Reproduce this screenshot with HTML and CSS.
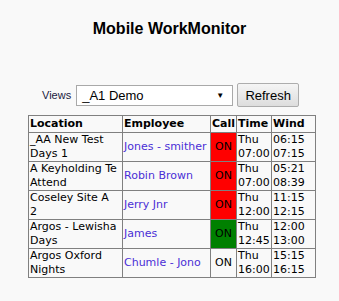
FILE: index.html
```html
<!DOCTYPE html>
<html lang="en">
<head>
    <meta charset="UTF-8">
    <title>Mobile WorkMonitor</title>
    <link rel="stylesheet" href="styles.css">
</head>
<body>
    <h1 class="title">Mobile WorkMonitor</h1>

    <div class="views">
        <span class="views-label">Views</span>
        <div class="select">
            <span>_A1 Demo</span>
            <span class="arrow">&#9660;</span>
        </div>
        <button class="refresh">Refresh</button>
    </div>

    <table class="jobs">
        <colgroup>
            <col class="c-loc">
            <col class="c-emp">
            <col class="c-call">
            <col class="c-time">
            <col class="c-wind">
        </colgroup>
        <tr>
            <th>Location</th>
            <th>Employee</th>
            <th>Call</th>
            <th>Time</th>
            <th>Wind</th>
        </tr>
        <tr>
            <td>_AA New Test Days 1</td>
            <td class="name">Jones - smither</td>
            <td class="call red">ON</td>
            <td>Thu 07:00</td>
            <td>06:15 07:15</td>
        </tr>
        <tr>
            <td>A Keyholding Te Attend</td>
            <td class="name">Robin Brown</td>
            <td class="call red">ON</td>
            <td>Thu 07:00</td>
            <td>05:21 08:39</td>
        </tr>
        <tr>
            <td>Coseley Site A 2</td>
            <td class="name">Jerry Jnr</td>
            <td class="call red">ON</td>
            <td>Thu 12:00</td>
            <td>11:15 12:15</td>
        </tr>
        <tr>
            <td>Argos - Lewisha Days</td>
            <td class="name">James</td>
            <td class="call green">ON</td>
            <td>Thu 12:45</td>
            <td>12:00 13:00</td>
        </tr>
        <tr>
            <td>Argos Oxford Nights</td>
            <td class="name">Chumle - Jono</td>
            <td class="call">ON</td>
            <td>Thu 16:00</td>
            <td>15:15 16:15</td>
        </tr>
    </table>
</body>
</html>
```

FILE: styles.css
```css
body{
    margin: 0;
    background-color: #f9f9f9;
    font-family: "Liberation Sans", Arial, sans-serif;
    color: #000;
}
.title{
    margin: 19px 0 0 0;
    font-size: 16px;
    font-weight: 700;
    text-align: center;
    line-height: 19px;
}
.views{
    display: flex;
    align-items: center;
    margin: 45px 0 0 42px;
    font-size: 11px;
}
.views-label{
    margin-right: 5px;
    color: #1a1a40;
}
.select{
    display: flex;
    justify-content: space-between;
    align-items: center;
    box-sizing: border-box;
    width: 157px;
    height: 21px;
    padding: 0 8px 0 5px;
    background-color: #fff;
    border: 1px solid #a9a9a9;
    font-size: 13px;
}
.arrow{
    font-size: 8px;
}
.refresh{
    box-sizing: border-box;
    height: 24px;
    width: 62px;
    margin-left: 4px;
    padding: 0;
    font-family: "Liberation Sans", Arial, sans-serif;
    font-size: 13px;
    color: #000;
    background: linear-gradient(#f5f5f5, #dddddd);
    border: 1px solid #adadad;
    border-radius: 2px;
}
.jobs{
    margin: 8px 0 0 28px;
    border-collapse: collapse;
    border: 1px solid #808080;
    font-family: "DejaVu Sans", Verdana, sans-serif;
    font-size: 11px;
    table-layout: fixed;
    width: 288px;
}
.c-loc{
    width: 94px;
}
.c-emp{
    width: 88px;
}
.c-call{
    width: 26px;
}
.c-time{
    width: 35px;
}
.jobs th, .jobs td{
    border: 1px solid #808080;
    padding: 0 1px;
    text-align: left;
    line-height: 14px;
    overflow: hidden;
}
.jobs td:first-child{
    padding-right: 4px;
}
.jobs th{
    font-weight: 700;
    height: 16px;
    line-height: 16px;
}
.jobs td{
    height: 28px;
}
.name{
    color: #4a2fd6;
}
.call{
    text-align: center !important;
}
.red{
    background-color: #ff0000;
}
.green{
    background-color: #008000;
}
```
